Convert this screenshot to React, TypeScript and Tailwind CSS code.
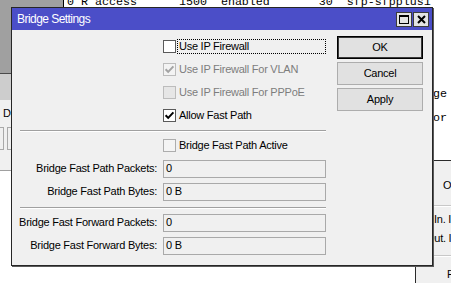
import React from "react";

type CheckVariant = "normal" | "disabled" | "readonly";

function Check({ checked, variant }: { checked?: boolean; variant: CheckVariant }) {
  const box =
    variant === "normal"
      ? "border-[#5a5a5a] bg-white"
      : variant === "disabled"
      ? checked
        ? "border-[#bcbcbc] bg-[#f3f3f3]"
        : "border-[#bcbcbc] bg-[#e6e6e6]"
      : "border-[#adadad] bg-[#f4f4f4]";
  const stroke = variant === "normal" ? "#000000" : "#a3a3a3";
  return (
    <div className={`flex h-[13px] w-[13px] shrink-0 items-center justify-center border ${box}`}>
      {checked && (
        <svg width="11" height="11" viewBox="0 0 11 11">
          <path d="M1.6 5.2 L4.2 7.9 L9.4 2.4" fill="none" stroke={stroke} strokeWidth="2" />
        </svg>
      )}
    </div>
  );
}

function CheckRow({
  label,
  checked,
  variant,
  focus,
}: {
  label: string;
  checked?: boolean;
  variant: CheckVariant;
  focus?: boolean;
}) {
  const text = variant === "disabled" ? "text-[#7d7d7d]" : "text-black";
  return (
    <div className="flex h-[23px] items-center">
      <div className="w-[151px] shrink-0" />
      <Check checked={checked} variant={variant} />
      <div
        className={`ml-[1px] flex h-[15px] flex-1 items-center border pl-[1px] ${
          focus ? "border-dotted border-black" : "border-transparent"
        } ${text}`}
      >
        {label}
      </div>
    </div>
  );
}

function FieldRow({ label, value }: { label: string; value: string }) {
  return (
    <div className="flex h-[23px] items-center">
      <div className="w-[151px] shrink-0 pr-[6px] text-right">{label}</div>
      <div className="flex h-[18px] w-[163px] items-center border border-[#a9a9a9] bg-[#f0f0f0] pl-[2px]">
        {value}
      </div>
    </div>
  );
}

function Separator({ top }: { top: string }) {
  return <div className={`ml-[8px] h-0 border-t border-b border-t-[#a0a0a0] border-b-white ${top} mb-[2px]`} />;
}

function Btn({ label, def }: { label: string; def?: boolean }) {
  return (
    <div
      className={`flex h-[23px] items-center justify-center bg-[#e1e1e1] ${
        def ? "border border-black shadow-[inset_0_0_0_1px_#3a3a3a]" : "border border-[#adadad]"
      }`}
    >
      {label}
    </div>
  );
}

export default function App() {
  return (
    <div className="relative h-[283px] w-[451px] overflow-hidden bg-white [font-family:'Liberation_Sans',Arial,sans-serif] text-[11px] tracking-[-0.25px] text-black">
      {/* background: left app window pieces */}
      <div className="absolute left-0 top-0 h-[74px] w-[63px] border-b border-[#4a4a4a] bg-[#a0a0a0]" />
      <div className="absolute left-0 top-[74px] h-[26px] w-[63px] bg-[#cdcdcd]" />
      <div className="absolute left-0 top-[100px] h-[71px] w-[63px] border-b border-[#a0a0a0] bg-[#f0f0f0]">
        <div className="absolute left-[3px] top-[6px] leading-[14px]">D</div>
        <div className="absolute left-[-10px] top-[27px] h-[23px] w-[14px] border border-[#a9a9a9] bg-[#f0f0f0]" />
        <div className="absolute left-[7px] top-[27px] h-[23px] w-[40px] border border-[#a9a9a9] bg-[#f0f0f0]" />
      </div>

      {/* background: table window */}
      <div className="absolute left-[63px] top-0 h-[160px] w-[400px] border-l border-black bg-white [font-family:'Liberation_Mono','Courier_New',monospace] text-[11.67px] tracking-normal">
        <div className="absolute left-[3px] top-[-5px] whitespace-pre leading-[14px]">
          {"0 R access      1500  enabled       30  sfp-sfpplus1"}
        </div>
        <div className="absolute left-[362px] top-[87px] whitespace-pre leading-[14px]">nge</div>
        <div className="absolute left-[362px] top-[111px] whitespace-pre leading-[14px]">tor</div>
      </div>

      {/* background: lower right panel */}
      <div className="absolute left-[415px] top-[160px] h-[140px] w-[60px] border-l border-t border-[#2a2a2a] bg-[#f0f0f0]">
        <div className="absolute left-[27px] top-[17px] leading-[14px]">O</div>
        <div className="absolute left-0 top-[44px] h-0 w-full border-t border-b border-t-[#c8c8c8] border-b-white" />
        <div className="absolute left-[18px] top-[51px] whitespace-nowrap leading-[14px]">In. Int</div>
        <div className="absolute left-[10px] top-[70px] whitespace-nowrap leading-[14px]">Out. Int</div>
        <div className="absolute left-0 top-[94px] h-0 w-full border-t border-b border-t-[#c8c8c8] border-b-white" />
        <div className="absolute left-[31px] top-[106px] leading-[14px]">F</div>
      </div>

      {/* dialog */}
      <div className="absolute left-[11px] top-[7px] flex h-[259px] w-[422px] flex-col border border-[#262626] bg-[#f0f0f0] shadow-[1px_1px_0_#5a5a5a]">
        <div className="flex h-[22px] shrink-0 items-center bg-[#4b4ec8] pl-[5px] pr-[3px]">
          <span className="flex-1 text-[12px] tracking-[-0.55px] text-white">Bridge Settings</span>
          <div className="flex gap-[1px]">
            <div className="flex h-[15px] w-[16px] items-center justify-center border border-[#3c3c3c] bg-[#e3e3e3]">
              <svg width="10" height="9" viewBox="0 0 10 9">
                <rect x="0.5" y="0.5" width="9" height="8" fill="none" stroke="#000" />
                <line x1="0" y1="1.5" x2="10" y2="1.5" stroke="#000" />
              </svg>
            </div>
            <div className="flex h-[15px] w-[16px] items-center justify-center border border-[#3c3c3c] bg-[#e3e3e3]">
              <svg width="9" height="9" viewBox="0 0 9 9">
                <path d="M1 1 L8 8 M8 1 L1 8" stroke="#000" strokeWidth="2" />
              </svg>
            </div>
          </div>
        </div>

        <div className="flex flex-1">
          <div className="flex w-[314px] shrink-0 flex-col pt-[5px]">
            <CheckRow label="Use IP Firewall" variant="normal" focus />
            <CheckRow label="Use IP Firewall For VLAN" variant="disabled" checked />
            <CheckRow label="Use IP Firewall For PPPoE" variant="disabled" />
            <CheckRow label="Allow Fast Path" variant="normal" checked />
            <Separator top="mt-[3px]" />
            <CheckRow label="Bridge Fast Path Active" variant="readonly" />
            <FieldRow label="Bridge Fast Path Packets:" value="0" />
            <FieldRow label="Bridge Fast Path Bytes:" value="0 B" />
            <Separator top="mt-[4px]" />
            <FieldRow label="Bridge Fast Forward Packets:" value="0" />
            <FieldRow label="Bridge Fast Forward Bytes:" value="0 B" />
          </div>
          <div className="ml-[11px] mt-[6px] flex w-[86px] flex-col gap-[3px]">
            <Btn label="OK" def />
            <Btn label="Cancel" />
            <Btn label="Apply" />
          </div>
        </div>
      </div>
    </div>
  );
}
